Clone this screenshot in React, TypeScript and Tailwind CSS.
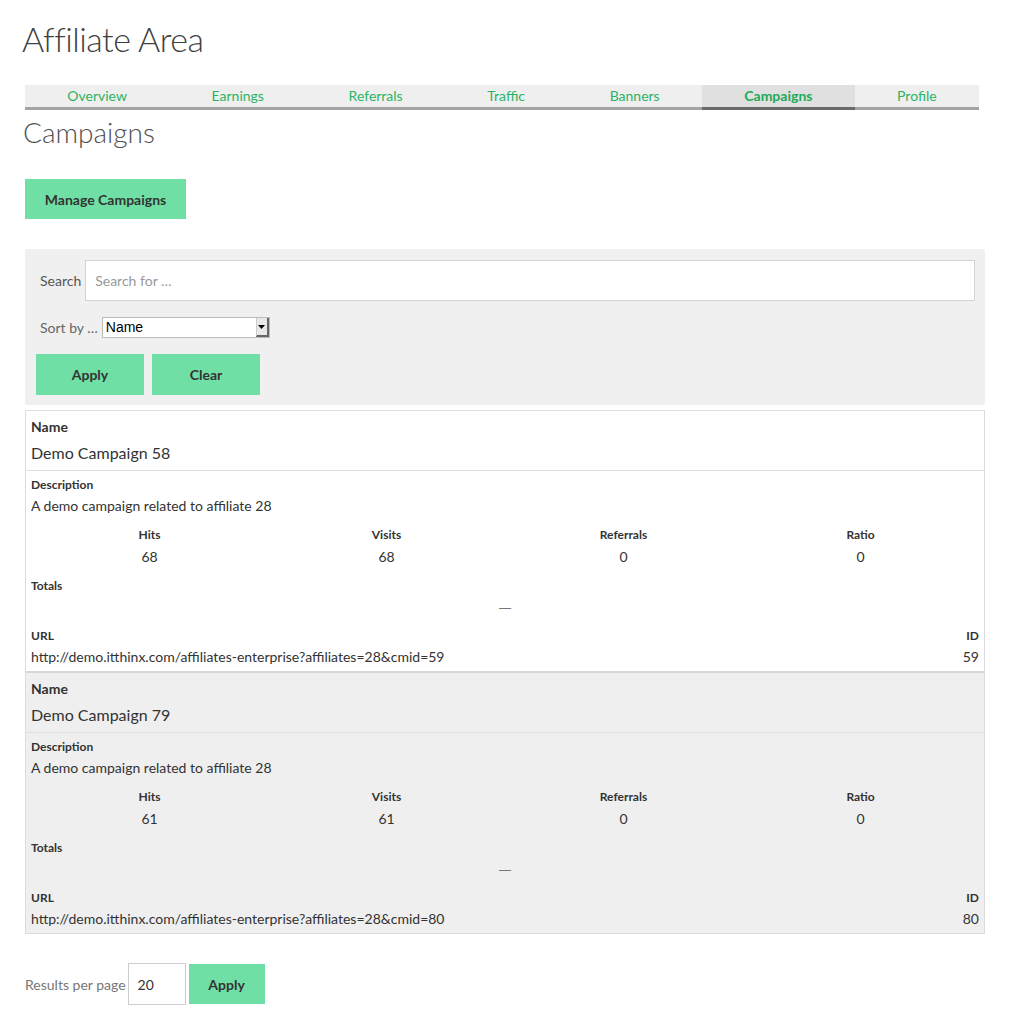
const tabs = ["Overview", "Earnings", "Referrals", "Traffic", "Banners", "Campaigns", "Profile"];

interface Campaign {
	name: string;
	description: string;
	hits: number;
	visits: number;
	referrals: number;
	ratio: number;
	url: string;
	id: number;
}

const campaigns: Campaign[] = [
	{
		name: "Demo Campaign 58",
		description: "A demo campaign related to affiliate 28",
		hits: 68,
		visits: 68,
		referrals: 0,
		ratio: 0,
		url: "http://demo.itthinx.com/affiliates-enterprise?affiliates=28&cmid=59",
		id: 59,
	},
	{
		name: "Demo Campaign 79",
		description: "A demo campaign related to affiliate 28",
		hits: 61,
		visits: 61,
		referrals: 0,
		ratio: 0,
		url: "http://demo.itthinx.com/affiliates-enterprise?affiliates=28&cmid=80",
		id: 80,
	},
];

function CampaignCard({ c, alt }: { c: Campaign; alt: boolean }) {
	const stats = [
		["Hits", c.hits],
		["Visits", c.visits],
		["Referrals", c.referrals],
		["Ratio", c.ratio],
	] as const;
	return (
		<div className={`text-[#333] ${alt ? "bg-[#efefef]" : "bg-white"}`}>
			<div className="px-[5px] pt-[5px] pb-[2px] border-b border-[#e0e0e0]">
				<div className="text-[14px] leading-[22px] font-bold">Name</div>
				<div className="text-[16px] leading-[30px]">{c.name}</div>
			</div>
			<div className="px-[5px] pt-[4px] pb-[3px]">
				<div className="text-[12px] leading-[20px] font-bold">Description</div>
				<div className="text-[14px] leading-[22px]">{c.description}</div>
				<div className="grid grid-cols-4 text-center mt-[8px]">
					{stats.map(([label, value]) => (
						<div key={label}>
							<div className="text-[12px] leading-[20px] font-bold">{label}</div>
							<div className="text-[14px] leading-[24px]">{value}</div>
						</div>
					))}
				</div>
				<div className="text-[12px] leading-[20px] font-bold mt-[7px]">Totals</div>
				<div className="text-[12px] leading-[24px] text-center text-[#777]" style={{ fontFamily: "'Liberation Sans', Arial, sans-serif" }}>
					—
				</div>
				<div className="flex justify-between mt-[6px]">
					<div>
						<div className="text-[12px] leading-[20px] font-bold">URL</div>
						<div className="text-[14px] leading-[22px]">{c.url}</div>
					</div>
					<div className="text-right">
						<div className="text-[12px] leading-[20px] font-bold">ID</div>
						<div className="text-[14px] leading-[22px]">{c.id}</div>
					</div>
				</div>
			</div>
		</div>
	);
}

export default function App() {
	return (
		<div className="min-h-[1024px] bg-white px-[25px] pt-[16px] text-[#444]" style={{ fontFamily: "Lato, 'Open Sans', sans-serif" }}>
			<h1 className="text-[34px] leading-[46px] font-light tracking-[-0.5px] text-[#404040] -ml-[3px]">Affiliate Area</h1>
			<nav className="mt-[23px] w-[954px] flex bg-[#efefef] border-b-[3px] border-[#a3a3a3]">
				{tabs.map((t) =>
					t === "Campaigns" ? (
						<div key={t} className="flex-auto text-center text-[14px] leading-[22px] font-bold text-[#1eaa58] bg-[#e0e0e0] -mb-[3px] border-b-[3px] border-[#6a6a6a]">
							{t}
						</div>
					) : (
						<div key={t} className="flex-auto text-center text-[14px] leading-[22px] text-[#2cb364]">
							{t}
						</div>
					)
				)}
			</nav>
			<h2 className="text-[28px] leading-[38px] font-light text-[#505050] -ml-[2px] mt-[3px]">Campaigns</h2>
			<button className="mt-[28px] w-[161px] h-[40px] bg-[#70dfa5] text-[14px] font-bold text-[#333]">Manage Campaigns</button>

			<div className="mt-[30px] bg-[#f0f0f0] rounded-[2px] pl-[11px] pr-[10px] pt-[11px] pb-[10px]">
				<div className="flex items-center">
					<label className="text-[14px] text-[#555] pl-[4px] pr-[4px]">Search</label>
					<input
						type="text"
						placeholder="Search for …"
						className="flex-1 h-[41px] bg-white border border-[#d4d4d4] px-[9px] text-[14px] placeholder:text-[#999] outline-none"
					/>
				</div>
				<div className="flex items-center mt-[16px] pl-[4px]">
					<label className="text-[14px] text-[#666] mr-[4px]">Sort by …</label>
					<div className="relative w-[168px] h-[21px] bg-white border border-[#bbb]">
						<select className="appearance-none block w-full h-[19px] leading-[19px] py-0 bg-transparent pl-[3px] text-[14px] text-black outline-none" style={{ fontFamily: "'Liberation Sans', Arial, sans-serif" }} defaultValue="name">
							<option value="name">Name</option>
						</select>
						<div className="absolute right-0 top-0 w-[13px] h-[19px] bg-[#e8e8e8] border-l border-[#ccc] border-b-[2px] border-r-[2px] border-b-[#666] border-r-[#666] flex items-center justify-center pointer-events-none">
							<svg width="7" height="4" viewBox="0 0 7 4"><path d="M0 0h7L3.5 4z" fill="#000" /></svg>
						</div>
					</div>
				</div>
				<div className="flex gap-[8px] mt-[16px]">
					<button className="w-[108px] h-[41px] bg-[#70dfa5] text-[14px] font-bold text-[#333]">Apply</button>
					<button className="w-[108px] h-[41px] bg-[#70dfa5] text-[14px] font-bold text-[#333]">Clear</button>
				</div>
			</div>

			<div className="mt-[5px] border border-[#dcdcdc] divide-y-[2px] divide-[#d6d6d6]">
				{campaigns.map((c, i) => (
					<CampaignCard key={c.id} c={c} alt={i % 2 === 1} />
				))}
			</div>

			<div className="flex items-center mt-[29px]">
				<label className="text-[14px] text-[#777] mr-[2px]">Results per page</label>
				<input type="text" defaultValue="20" className="w-[58px] h-[42px] border border-[#ccc] px-[9px] text-[14px] text-[#333] outline-none" />
				<button className="ml-[3px] w-[76px] h-[40px] bg-[#70dfa5] text-[14px] font-bold text-[#333]">Apply</button>
			</div>
		</div>
	);
}
